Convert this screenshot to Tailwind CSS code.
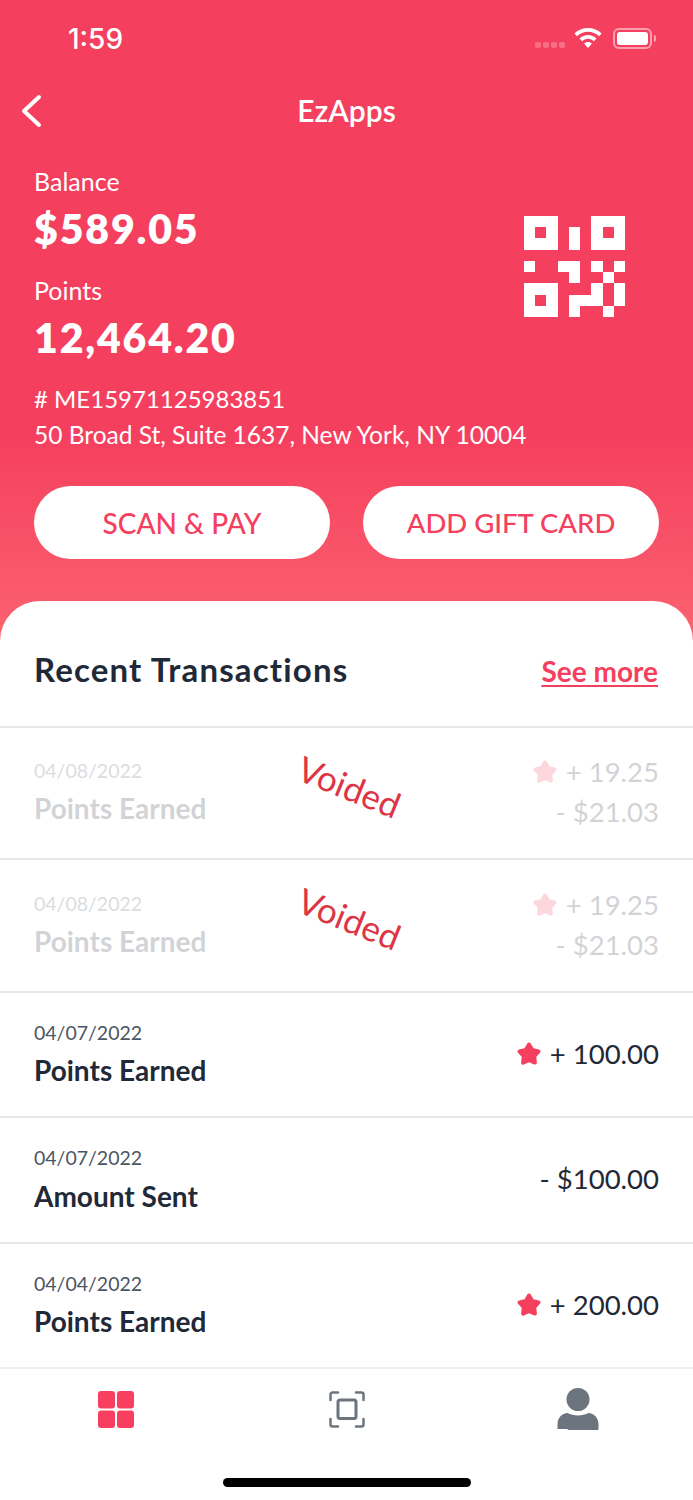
<!DOCTYPE html>
<html>
<head>
<meta charset="utf-8">
<script src="https://cdn.jsdelivr.net/npm/@tailwindcss/browser@4"></script>
</head>
<body class="bg-white">
<div class="w-[693px] h-[1500px] overflow-hidden bg-white flex flex-col font-['Lato',sans-serif] text-[#1f2937]">
  <!-- Hero -->
  <div class="h-[641px] shrink-0 bg-[linear-gradient(180deg,#f53f5e_0%,#f53f5e_68%,#fb6370_100%)] text-white flex flex-col">
    <div class="h-[76px] shrink-0 flex items-center justify-between pl-[68px] pr-[38px]">
      <span class="font-['Inter',sans-serif] font-medium text-[28px] leading-none mt-[2px]">1:59</span>
      <div class="flex items-center mr-[3px]">
        <div class="flex gap-[2px] mt-[14px] mr-[9px]">
          <span class="w-[6px] h-[6px] rounded-[2px] bg-white/25"></span><span class="w-[6px] h-[6px] rounded-[2px] bg-white/25"></span><span class="w-[6px] h-[6px] rounded-[2px] bg-white/25"></span><span class="w-[6px] h-[6px] rounded-[2px] bg-white/25"></span>
        </div>
        <svg class="w-[28px] h-[20px] mr-[11px]" viewBox="0 0 28 20" fill="#fff">
          <path d="M14 0C8.8 0 4 2 .4 5.4l2.6 2.8C6 5.4 9.800 3.800 14 3.800s8 1.600 11 4.400l2.600-2.800C24 2 19.200 0 14 0z"/>
          <path d="M14 7C10.700 7 7.700 8.300 5.500 10.400l2.600 2.800C9.700 11.800 11.700 10.800 14 10.800s4.300 1 5.900 2.400l2.600-2.800C20.300 8.300 17.300 7 14 7z"/>
          <path d="M14 14c-1.500 0-2.900.6-3.900 1.500L14 20l3.900-4.500C16.900 14.600 15.500 14 14 14z"/>
        </svg>
        <div class="relative w-[39px] h-[21px] rounded-[6px] border-2 border-white/50 p-[2px]">
          <div class="w-full h-full rounded-[3px] bg-white"></div>
          <span class="absolute right-[-6px] top-[5px] w-[2px] h-[7px] rounded-r-full bg-white/50"></span>
        </div>
      </div>
    </div>
    <div class="relative h-[70px] shrink-0 flex items-center justify-center">
      <svg class="absolute left-[20px] top-[18px] w-[24px] h-[34px]" viewBox="0 0 24 34" fill="none" stroke="#fff" stroke-width="4" stroke-linecap="round" stroke-linejoin="round"><path d="M19 3 4 17l15 14"/></svg>
      <span class="text-[30px] font-semibold leading-none mt-[-3px]">EzApps</span>
    </div>
    <div class="relative px-[34px] flex flex-col mt-[20px]">
      <div class="text-[25px] leading-[32px] mt-[-1px]">Balance</div>
      <div class="text-[41px] font-extrabold tracking-[1.85px] leading-[50px] mt-[7px]">$589.05</div>
      <div class="text-[25px] leading-[32px] mt-[20px]">Points</div>
      <div class="text-[41px] font-extrabold tracking-[1.85px] leading-[50px] mt-[7px]">12,464.20</div>
      <div class="text-[24px] leading-[35px] mt-[18px]"># ME15971125983851</div>
      <div class="text-[24.500px] leading-[35px] mt-[1px]">50 Broad St, Suite 1637, New York, NY 10004</div>
      <svg class="absolute left-[524px] top-[50px] w-[101px] h-[101px]" viewBox="0 0 9 9" fill="#fff" shape-rendering="crispEdges">
        <path fill-rule="evenodd" d="M0 0h3v3H0zM1 1v1h1V1zM6 0h3v3H6zM7 1v1h1V1zM0 6h3v3H0zM1 7v1h1V7z"/>
        <path d="M4 1h1v2H4zM0 4h1v1H0zM3 4h2v2H4V5H3zM6 4h1v1H6zM8 4h1v1H8zM7 5h1v1H7zM6 6h1v2H4v1h1V8H4V7h2zM8 6h1v2H8zM7 8h1v1H7z"/>
      </svg>
    </div>
    <div class="flex gap-[33px] px-[34px] mt-[34px]">
      <button class="w-[296px] h-[73px] rounded-full bg-white text-[#f53f5e] text-[28px] font-medium">SCAN &amp; PAY</button>
      <button class="w-[296px] h-[73px] rounded-full bg-white text-[#f53f5e] text-[27.500px] font-medium">ADD GIFT CARD</button>
    </div>
  </div>
  <!-- Card -->
  <div class="mt-[-40px] relative rounded-t-[40px] bg-white flex flex-col flex-1">
    <div class="h-[127px] shrink-0 flex items-center justify-between pl-[34px] pr-[35px] border-b-2 border-[#e7e8ea]">
      <span class="text-[33px] font-bold tracking-[1.150px] leading-none mt-[11px]">Recent Transactions</span>
      <span class="text-[28px] font-bold leading-none text-[#f53f5e] underline underline-offset-[3px] mt-[15px]">See more</span>
    </div>

    <div class="relative h-[132px] shrink-0 border-b-2 border-[#e7e8ea]">
      <div class="h-full px-[34px] flex justify-between items-center opacity-20">
        <div class="flex flex-col gap-[6px] mt-[-4px]">
          <span class="text-[19.500px] leading-[28px] text-[#4b5563]">04/08/2022</span>
          <span class="text-[28px] font-bold leading-[34px]">Points Earned</span>
        </div>
        <div class="flex flex-col items-end gap-[9px] mt-[-3px]">
          <div class="flex items-center gap-[8px]">
            <svg class="w-[26px] h-[25px]" viewBox="0 0 26 25" fill="#f53f5e" stroke="#f53f5e" stroke-width="4" stroke-linejoin="round"><path d="M13 3.500 16.200 9.050 22.500 10.400 18.200 15.200 18.900 21.600 13 19 7.100 21.600 7.800 15.200 3.500 10.400 9.800 9.050z"/></svg>
            <span class="text-[27.500px] leading-[31px]">+ 19.25</span>
          </div>
          <span class="text-[27.500px] leading-[31px]">- $21.03</span>
        </div>
      </div>
      <span class="absolute left-[296px] top-[38px] rotate-[22deg] text-[35px] leading-[40px] text-[#dc3545]">Voided</span>
    </div>

    <div class="relative h-[133px] shrink-0 border-b-2 border-[#e7e8ea]">
      <div class="h-full px-[34px] flex justify-between items-center opacity-20">
        <div class="flex flex-col gap-[6px] mt-[-4px]">
          <span class="text-[19.500px] leading-[28px] text-[#4b5563]">04/08/2022</span>
          <span class="text-[28px] font-bold leading-[34px]">Points Earned</span>
        </div>
        <div class="flex flex-col items-end gap-[9px] mt-[-3px]">
          <div class="flex items-center gap-[8px]">
            <svg class="w-[26px] h-[25px]" viewBox="0 0 26 25" fill="#f53f5e" stroke="#f53f5e" stroke-width="4" stroke-linejoin="round"><path d="M13 3.500 16.200 9.050 22.500 10.400 18.200 15.200 18.900 21.600 13 19 7.100 21.600 7.800 15.200 3.500 10.400 9.800 9.050z"/></svg>
            <span class="text-[27.500px] leading-[31px]">+ 19.25</span>
          </div>
          <span class="text-[27.500px] leading-[31px]">- $21.03</span>
        </div>
      </div>
      <span class="absolute left-[296px] top-[38px] rotate-[22deg] text-[35px] leading-[40px] text-[#dc3545]">Voided</span>
    </div>

    <div class="h-[125px] shrink-0 border-b-2 border-[#e7e8ea] px-[34px] flex justify-between">
      <div class="flex flex-col gap-[6px] pt-[26px]">
        <span class="text-[19.500px] leading-[28px] text-[#4b5563]">04/07/2022</span>
        <span class="text-[28px] font-bold leading-[34px]">Points Earned</span>
      </div>
      <div class="flex items-center gap-[8px] h-[31px] mt-[45px]">
        <svg class="w-[26px] h-[25px]" viewBox="0 0 26 25" fill="#f53f5e" stroke="#f53f5e" stroke-width="4" stroke-linejoin="round"><path d="M13 3.500 16.200 9.050 22.500 10.400 18.200 15.200 18.900 21.600 13 19 7.100 21.600 7.800 15.200 3.500 10.400 9.800 9.050z"/></svg>
        <span class="text-[27.500px] leading-[31px]">+ 100.00</span>
      </div>
    </div>

    <div class="h-[126px] shrink-0 border-b-2 border-[#e7e8ea] px-[34px] flex justify-between">
      <div class="flex flex-col gap-[7px] pt-[26px]">
        <span class="text-[19.500px] leading-[28px] text-[#4b5563]">04/07/2022</span>
        <span class="text-[28px] font-bold leading-[34px]">Amount Sent</span>
      </div>
      <div class="flex items-center h-[31px] mt-[45px]">
        <span class="text-[27.500px] leading-[31px]">- $100.00</span>
      </div>
    </div>

    <div class="h-[125px] shrink-0 border-b-2 border-[#eeeff0] px-[34px] flex justify-between">
      <div class="flex flex-col gap-[6px] pt-[26px]">
        <span class="text-[19.500px] leading-[28px] text-[#4b5563]">04/04/2022</span>
        <span class="text-[28px] font-bold leading-[34px]">Points Earned</span>
      </div>
      <div class="flex items-center gap-[8px] h-[31px] mt-[45px]">
        <svg class="w-[26px] h-[25px]" viewBox="0 0 26 25" fill="#f53f5e" stroke="#f53f5e" stroke-width="4" stroke-linejoin="round"><path d="M13 3.500 16.200 9.050 22.500 10.400 18.200 15.200 18.900 21.600 13 19 7.100 21.600 7.800 15.200 3.500 10.400 9.800 9.050z"/></svg>
        <span class="text-[27.500px] leading-[31px]">+ 200.00</span>
      </div>
    </div>

    <!-- Tab bar -->
    <div class="flex flex-col flex-1">
      <div class="grid grid-cols-3 pt-[19px] justify-items-center items-start h-[64px]">
        <svg class="w-[36px] h-[38px] mt-[3px]" viewBox="0 0 36 38" fill="#f93f60"><rect x="0" y="0" width="17" height="17.500" rx="3"/><rect x="19" y="0" width="17" height="17.500" rx="3"/><rect x="0" y="19.500" width="17" height="17.500" rx="3"/><rect x="19" y="19.500" width="17" height="17.500" rx="3"/></svg>
        <svg class="w-[36px] h-[38px] mt-[3px]" viewBox="0 0 36 38" fill="none" stroke="#6c757d" stroke-width="2.500" stroke-linecap="round"><path d="M1.500 9V3.500a2 2 0 0 1 2-2H9M27 1.500h5.500a2 2 0 0 1 2 2V9M34.500 28v5.500a2 2 0 0 1-2 2H27M9 35.500H3.500a2 2 0 0 1-2-2V28"/><rect x="9" y="9" width="18" height="18.500" rx="2" stroke-width="3"/></svg>
        <svg class="w-[42px] h-[42px]" viewBox="0 0 42 42" fill="#6c757d"><ellipse cx="21" cy="11.500" rx="11.500" ry="11.500"/><path d="M.5 41v-5c0-6 4.500-11 10-11 3 1.500 6.500 2.500 10.500 2.500s7.500-1 10.500-2.500c5.500 0 10 5 10 11v5a1 1 0 0 1-1 1h-29a1 1 0 0 1-1-1z"/></svg>
      </div>
      <div class="flex justify-center mt-[45px]">
        <div class="w-[248px] h-[9px] rounded-full bg-black"></div>
      </div>
    </div>
  </div>
</div>
</body>
</html>
